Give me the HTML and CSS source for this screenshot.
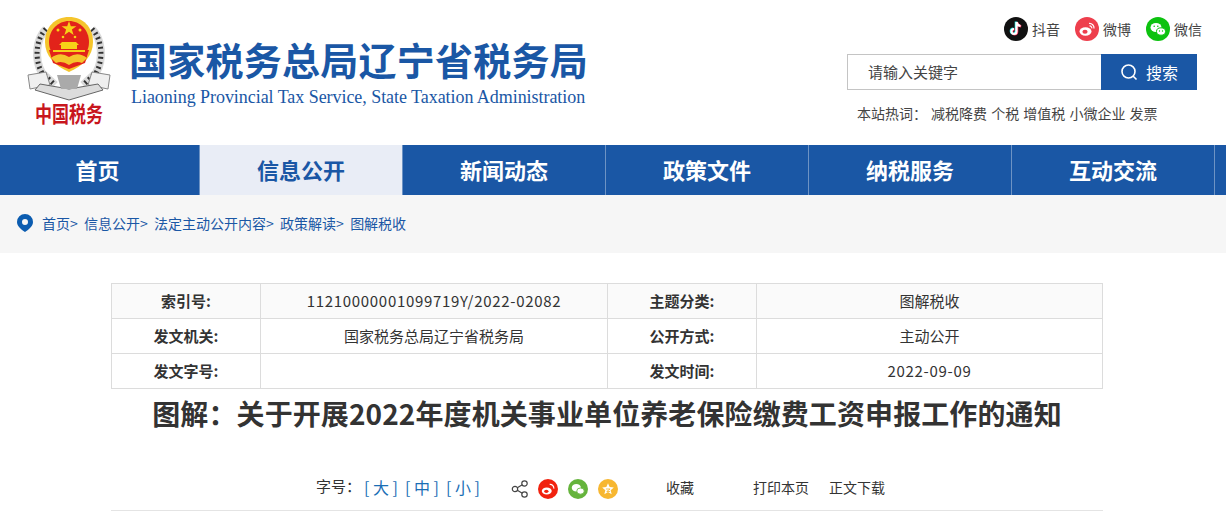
FILE: index.html
```html
<!DOCTYPE html>
<html lang="zh-CN">
<head>
    <meta charset="UTF-8">
    <title>国家税务总局辽宁省税务局</title>
    <link rel="stylesheet" href="styles.css">
</head>
<body>
    <!-- Header -->
    <header class="header">
        <div class="brand">
            <svg class="emblem" width="84" height="112" viewBox="0 0 84 112">
                <g transform="translate(0 -3)">
                    <!-- wreath -->
                    <path d="M19 16C9 26 7 46 15 60L28 72" fill="none" stroke="#d9d9d9" stroke-width="8"/>
                    <path d="M65 16C75 26 77 46 69 60L56 72" fill="none" stroke="#d9d9d9" stroke-width="8"/>
                    <path d="M19 16C9 26 7 46 15 60L28 72" fill="none" stroke="#333" stroke-width="5" stroke-dasharray="2 3"/>
                    <path d="M65 16C75 26 77 46 69 60L56 72" fill="none" stroke="#333" stroke-width="5" stroke-dasharray="2 3"/>
                    <!-- ribbon -->
                    <path d="M1 62L19 59L23 72L3 76Z" fill="#efefef" stroke="#888"/>
                    <path d="M83 62L65 59L61 72L81 76Z" fill="#efefef" stroke="#888"/>
                    <path d="M13 71L42 76L71 71L76 77L42 87L8 77Z" fill="#dcdcdc" stroke="#666"/>
                    <path d="M30 62H54L50 76H34Z" fill="#aaa"/>
                    <!-- shield -->
                    <path d="M42 4C56 4 66 14 66 29C66 43 56 53 42 59C28 53 18 43 18 29C18 14 28 4 42 4Z" fill="#f5c52c"/>
                    <path d="M42 8C53 8 62 17 62 29C62 33 61 36 60 38H24C23 36 22 33 22 29C22 17 31 8 42 8Z" fill="#e2231a"/>
                    <path d="M22 37H62L58 50L42 56L26 50Z" fill="#e2231a"/>
                    <path d="M42 8l1.800 5.300h5.600l-4.500 3.300 1.700 5.400-4.600-3.300-4.600 3.300 1.700-5.400-4.500-3.300h5.600z" fill="#f7d117"/>
                    <circle cx="31" cy="17" r="1.500" fill="#f7d117"/>
                    <circle cx="53" cy="17" r="1.500" fill="#f7d117"/>
                    <circle cx="36" cy="24" r="1.300" fill="#f7d117"/>
                    <circle cx="48" cy="24" r="1.300" fill="#f7d117"/>
                    <path d="M35 29h14l3 3H32zM34 32h16v4H34zM26 37h32v2H26z" fill="#f7d117"/>
                    <path d="M24 45q9-7 18-1q9-6 18 1l-5 5q-6-3-13 2q-7-5-13-2z" fill="#f5c52c"/>
                </g>
                <text class="emblem-text" transform="translate(8 106) scale(1 1.3)">中国税务</text>
            </svg>
            <div class="brand-text">
                <h1 class="brand-cn">国家税务总局辽宁省税务局</h1>
                <p class="brand-en">Liaoning Provincial Tax Service, State Taxation Administration</p>
            </div>
        </div>
        <div class="tools">
            <div class="social">
                <a class="social-item">
                    <svg width="24" height="24" viewBox="0 0 24 24">
                        <circle cx="12" cy="12" r="12" fill="#111"/>
                        <path d="M12.500 5v9.500a2.500 2.500 0 1 1-2.500-2.500M12.500 5c.3 2.300 1.800 3.700 4 4" fill="none" stroke="#25f4ee" stroke-width="2.200" transform="translate(-.7 -.4)"/>
                        <path d="M12.500 5v9.500a2.500 2.500 0 1 1-2.500-2.500M12.500 5c.3 2.300 1.800 3.700 4 4" fill="none" stroke="#fe2c55" stroke-width="2.200" transform="translate(.7 .4)"/>
                        <path d="M12.500 5v9.500a2.500 2.500 0 1 1-2.500-2.500M12.500 5c.3 2.300 1.800 3.700 4 4" fill="none" stroke="#fff" stroke-width="2.200"/>
                    </svg>
                    抖音
                </a>
                <a class="social-item">
                    <svg width="24" height="24" viewBox="0 0 24 24">
                        <circle cx="12" cy="12" r="12" fill="#ee3f4d"/>
                        <ellipse cx="10.500" cy="14.500" rx="6" ry="4.200" fill="#fff"/>
                        <ellipse cx="10" cy="14.800" rx="2.600" ry="2" fill="#ee3f4d"/>
                        <path d="M14 6.500a4.500 4.500 0 0 1 5 5M14.500 9a2 2 0 0 1 2.300 2.300" fill="none" stroke="#fff" stroke-width="1.200"/>
                    </svg>
                    微博
                </a>
                <a class="social-item">
                    <svg width="24" height="24" viewBox="0 0 24 24">
                        <circle cx="12" cy="12" r="12" fill="#0cc20f"/>
                        <ellipse cx="10" cy="10.500" rx="5.500" ry="4.500" fill="#fff"/>
                        <ellipse cx="15" cy="14.500" rx="4.500" ry="3.700" fill="#fff" stroke="#0cc20f"/>
                        <circle cx="8.200" cy="9.300" r=".8" fill="#0cc20f"/>
                        <circle cx="11.800" cy="9.300" r=".8" fill="#0cc20f"/>
                        <circle cx="13.500" cy="14" r=".7" fill="#0cc20f"/>
                        <circle cx="16.500" cy="14" r=".7" fill="#0cc20f"/>
                    </svg>
                    微信
                </a>
            </div>
            <div class="search">
                <div class="search-input">请输入关键字</div>
                <button class="search-btn">
                    <svg width="18" height="18" viewBox="0 0 18 18">
                        <circle cx="8.500" cy="8.500" r="6.500" fill="none" stroke="#fff" stroke-width="1.600"/>
                        <path d="M13 13l3.500 3.500" stroke="#fff" stroke-width="1.600"/>
                    </svg>
                    搜索
                </button>
            </div>
            <p class="hot"><span class="hot-label">本站热词：</span>减税降费 个税 增值税 小微企业 发票</p>
        </div>
    </header>

    <!-- Nav -->
    <nav class="nav">
        <a class="nav-item">首页</a>
        <a class="nav-item active">信息公开</a>
        <a class="nav-item">新闻动态</a>
        <a class="nav-item">政策文件</a>
        <a class="nav-item">纳税服务</a>
        <a class="nav-item">互动交流</a>
    </nav>

    <!-- Breadcrumb -->
    <div class="crumb">
        <svg width="16" height="18" viewBox="0 0 16 18">
            <path fill-rule="evenodd" d="M8 0a8 8 0 0 1 8 8c0 4-4 7.500-8 10C4 15.500 0 12 0 8a8 8 0 0 1 8-8zm0 5a3 3 0 1 0 0 6 3 3 0 0 0 0-6z" fill="#0b5cb0"/>
        </svg>
        <span>首页&gt;</span>
        <span>信息公开&gt;</span>
        <span>法定主动公开内容&gt;</span>
        <span>政策解读&gt;</span>
        <span>图解税收</span>
    </div>

    <!-- Article -->
    <main class="article">
        <table class="meta">
            <tr>
                <th>索引号:</th><td class="num">11210000001099719Y/2022-02082</td>
                <th>主题分类:</th><td>图解税收</td>
            </tr>
            <tr>
                <th>发文机关:</th><td>国家税务总局辽宁省税务局</td>
                <th>公开方式:</th><td>主动公开</td>
            </tr>
            <tr>
                <th>发文字号:</th><td></td>
                <th>发文时间:</th><td class="num">2022-09-09</td>
            </tr>
        </table>
        <h2 class="title">图解：关于开展2022年度机关事业单位养老保险缴费工资申报工作的通知</h2>
        <div class="actions">
            <div class="size">
                <span class="size-label">字号：</span>
                <a>[ 大 ]</a>
                <a>[ 中 ]</a>
                <a>[ 小 ]</a>
            </div>
            <div class="share">
                <svg class="share-link" width="18" height="18" viewBox="0 0 18 18">
                    <circle cx="4" cy="9" r="2.700" fill="none" stroke="#444" stroke-width="1.200"/>
                    <circle cx="13.500" cy="3.500" r="2.700" fill="none" stroke="#444" stroke-width="1.200"/>
                    <circle cx="13.500" cy="14.500" r="2.700" fill="none" stroke="#444" stroke-width="1.200"/>
                    <path d="M6.300 7.700l5-3M6.300 10.300l5 3" stroke="#444" stroke-width="1.200"/>
                </svg>
                <svg width="20" height="20" viewBox="0 0 24 24">
                    <circle cx="12" cy="12" r="12" fill="#f1220f"/>
                    <ellipse cx="10.500" cy="14.500" rx="6" ry="4.200" fill="#fff"/>
                    <ellipse cx="10" cy="14.800" rx="2.600" ry="2" fill="#f1220f"/>
                    <path d="M14 6.500a4.500 4.500 0 0 1 5 5" fill="none" stroke="#fff" stroke-width="1.400"/>
                </svg>
                <svg width="20" height="20" viewBox="0 0 24 24">
                    <circle cx="12" cy="12" r="12" fill="#65b43c"/>
                    <ellipse cx="10" cy="10.500" rx="5.500" ry="4.500" fill="#fff"/>
                    <ellipse cx="15" cy="14.500" rx="4.500" ry="3.700" fill="#fff" stroke="#65b43c"/>
                </svg>
                <svg width="20" height="20" viewBox="0 0 24 24">
                    <circle cx="12" cy="12" r="12" fill="#f7b731"/>
                    <path d="M12 5l2 4.700 5 .4-3.800 3.300 1.200 5-4.400-2.700-4.400 2.700 1.200-5L5 10.100l5-.4z" fill="#fff"/>
                    <path d="M9.500 12h5l-4 3h4" fill="none" stroke="#f7b731"/>
                </svg>
            </div>
            <a class="act act-fav">收藏</a>
            <a class="act act-print">打印本页</a>
            <a class="act act-down">正文下载</a>
        </div>
    </main>
</body>
</html>
```

FILE: styles.css
```css
* {
    box-sizing: border-box;
}

html, body {
    height: 517px;
    overflow: hidden;
}

body {
    margin: 0;
    background: #fff;
    color: #333;
    font-family: "Noto Sans CJK SC", "Liberation Sans", sans-serif;
    font-size: 14px;
}

p, h1, h2 {
    margin: 0;
}

/* Header */
.header {
    height: 145px;
    display: flex;
    justify-content: space-between;
    padding: 16px 29px 0 27px;
}

.brand {
    display: flex;
    gap: 19px;
}

.emblem-text {
    font-size: 17px;
    font-weight: 700;
    fill: #c8161d;
}

.brand-text {
    padding-top: 21px;
}

.brand-cn {
    margin-left: -1px;
    color: #1a57a5;
    font-size: 38px;
    line-height: 44px;
    font-weight: 700;
    letter-spacing: 0.25px;
    white-space: nowrap;
}

.brand-en {
    margin: 6px 0 0 1px;
    color: #1a57a5;
    font-family: "Liberation Serif", serif;
    font-size: 18px;
    line-height: 20px;
    letter-spacing: -0.05px;
    white-space: nowrap;
}

.tools {
    width: 350px;
    display: flex;
    flex-direction: column;
}

.social {
    display: flex;
    justify-content: flex-end;
    gap: 15px;
    height: 26px;
    margin: 0 -5px 12px 0;
    align-items: center;
}

.social-item {
    display: flex;
    align-items: center;
    gap: 4px;
    color: #444;
}

.search {
    display: flex;
    height: 36px;
}

.search-input {
    width: 254px;
    border: 1px solid #c4c4c4;
    border-right: 0;
    padding-left: 20px;
    font-size: 15px;
    line-height: 33px;
    color: #444;
}

.search-btn {
    width: 96px;
    border: 0;
    background: #1a57a5;
    color: #fff;
    font-size: 16px;
    font-family: inherit;
    display: flex;
    align-items: center;
    justify-content: center;
    gap: 8px;
}

.hot {
    margin-top: 14px;
    padding-left: 10px;
    line-height: 18px;
    color: #444;
    word-spacing: 1px;
    white-space: nowrap;
}

.hot-label {
    margin-right: 4px;
}

/* Nav */
.nav {
    height: 50px;
    background: #1a57a5;
    display: flex;
}

.nav-item {
    width: 203px;
    border-right: 1px solid #6d93c4;
    color: #fff;
    font-size: 22px;
    font-weight: 700;
    line-height: 48px;
    text-align: center;
}

.nav-item:first-child {
    width: 200px;
    padding-right: 4px;
}

.nav-item.active {
    background: #e9edf6;
    color: #1a57a5;
}

/* Breadcrumb */
.crumb {
    height: 58px;
    background: #f6f6f6;
    display: flex;
    align-items: center;
    padding: 0 0 2px 17px;
    gap: 6.25px;
    color: #1a57a5;
    font-size: 14px;
}

.crumb svg {
    margin-right: 2.750px;
}

/* Article */
.article {
    width: 992px;
    margin-left: 111px;
    padding-top: 30px;
}

.meta {
    width: 100%;
    table-layout: fixed;
    border-collapse: collapse;
}

.meta th, .meta td {
    height: 35px;
    padding: 0 0 2px;
    border: 1px solid #dcdcdc;
    text-align: center;
    font-size: 15px;
    color: #333;
}

.meta th {
    width: 149px;
    font-weight: 700;
}

.meta td:nth-child(2) {
    width: 347px;
}

.meta td.num {
    letter-spacing: 0.7px;
}

.meta tr:first-child th, .meta tr:first-child td {
    background: #fafafa;
}

.title {
    margin-top: 6px;
    font-size: 28px;
    line-height: 36px;
    font-weight: 700;
    letter-spacing: 0.1px;
    text-align: center;
    white-space: nowrap;
}

.actions {
    height: 54px;
    margin-top: 26px;
    border-bottom: 1px solid #e4e4e4;
    padding: 7px 0 0 205px;
    display: flex;
    align-items: center;
}

.size {
    display: flex;
    gap: 7px;
    white-space: nowrap;
}

.size-label {
    font-size: 15px;
    margin-right: -4px;
}

.size a {
    color: #1a6eb5;
    font-size: 16px;
}

.share {
    display: flex;
    align-items: center;
    gap: 10px;
    margin: 4px 0 0 31px;
}

.share-link {
    margin-right: -1px;
}

.act {
    color: #333;
    white-space: nowrap;
}

.act-fav {
    margin-left: 48px;
}

.act-print {
    margin-left: 59px;
}

.act-down {
    margin-left: 20px;
}
```
